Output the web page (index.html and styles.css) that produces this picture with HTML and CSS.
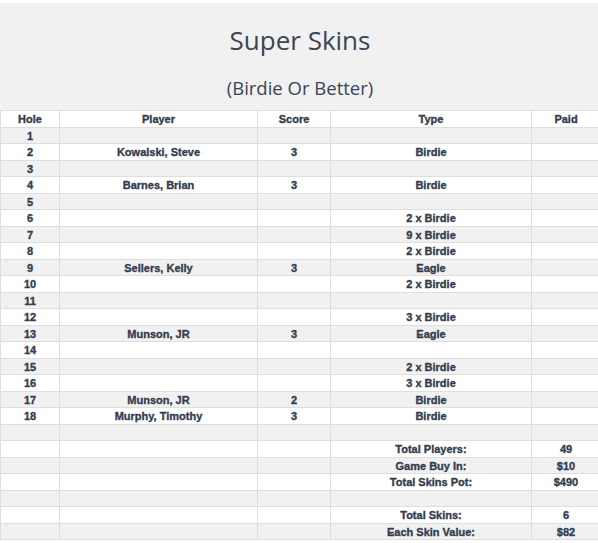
FILE: index.html
```html
<!DOCTYPE html>
<html>
<head>
<meta charset="utf-8">
<link rel="stylesheet" href="styles.css">
</head>
<body>
<div class="page">
  <header class="banner">
    <h1 class="title">Super Skins</h1>
    <h2 class="subtitle">(Birdie Or Better)</h2>
  </header>
  <table class="skins">
    <colgroup>
      <col class="c-hole"><col class="c-player"><col class="c-score"><col class="c-type"><col class="c-paid">
    </colgroup>
    <thead>
      <tr><th>Hole</th><th>Player</th><th>Score</th><th>Type</th><th>Paid</th></tr>
    </thead>
    <tbody>
      <tr><td>1</td><td></td><td></td><td></td><td></td></tr>
      <tr><td>2</td><td>Kowalski, Steve</td><td>3</td><td>Birdie</td><td></td></tr>
      <tr><td>3</td><td></td><td></td><td></td><td></td></tr>
      <tr><td>4</td><td>Barnes, Brian</td><td>3</td><td>Birdie</td><td></td></tr>
      <tr><td>5</td><td></td><td></td><td></td><td></td></tr>
      <tr><td>6</td><td></td><td></td><td>2 x Birdie</td><td></td></tr>
      <tr><td>7</td><td></td><td></td><td>9 x Birdie</td><td></td></tr>
      <tr><td>8</td><td></td><td></td><td>2 x Birdie</td><td></td></tr>
      <tr><td>9</td><td>Sellers, Kelly</td><td>3</td><td>Eagle</td><td></td></tr>
      <tr><td>10</td><td></td><td></td><td>2 x Birdie</td><td></td></tr>
      <tr><td>11</td><td></td><td></td><td></td><td></td></tr>
      <tr><td>12</td><td></td><td></td><td>3 x Birdie</td><td></td></tr>
      <tr><td>13</td><td>Munson, JR</td><td>3</td><td>Eagle</td><td></td></tr>
      <tr><td>14</td><td></td><td></td><td></td><td></td></tr>
      <tr><td>15</td><td></td><td></td><td>2 x Birdie</td><td></td></tr>
      <tr><td>16</td><td></td><td></td><td>3 x Birdie</td><td></td></tr>
      <tr><td>17</td><td>Munson, JR</td><td>2</td><td>Birdie</td><td></td></tr>
      <tr><td>18</td><td>Murphy, Timothy</td><td>3</td><td>Birdie</td><td></td></tr>
      <tr><td></td><td></td><td></td><td></td><td></td></tr>
      <tr><td></td><td></td><td></td><td>Total Players:</td><td>49</td></tr>
      <tr><td></td><td></td><td></td><td>Game Buy In:</td><td>$10</td></tr>
      <tr><td></td><td></td><td></td><td>Total Skins Pot:</td><td>$490</td></tr>
      <tr><td></td><td></td><td></td><td></td><td></td></tr>
      <tr><td></td><td></td><td></td><td>Total Skins:</td><td>6</td></tr>
      <tr><td></td><td></td><td></td><td>Each Skin Value:</td><td>$82</td></tr>
    </tbody>
  </table>
</div>
</body>
</html>
```
FILE: styles.css
```css
html, body {
  margin: 0;
  padding: 0;
  background: #ffffff;
}
.page {
  padding-top: 3px;
  width: 600px;
}
.banner {
  background: #f1f1f1;
  height: 107px;
  display: flex;
  flex-direction: column;
  align-items: center;
  box-sizing: border-box;
  padding-top: 20px;
}
.title {
  margin: 0;
  font-family: "Open Sans", "DejaVu Sans", sans-serif;
  font-weight: 400;
  font-size: 26px;
  line-height: 34px;
  color: #3a4556;
}
.subtitle {
  margin: 19px 0 0;
  font-family: "Open Sans", "DejaVu Sans", sans-serif;
  font-weight: 400;
  font-size: 18.5px;
  line-height: 24px;
  color: #3a4556;
}
.skins {
  border-collapse: collapse;
  table-layout: fixed;
  width: 600px;
  font-family: "Liberation Sans", Arial, sans-serif;
  font-weight: 700;
  font-size: 11px;
  color: #333d4f;
}
.c-hole { width: 59px; }
.c-player { width: 198px; }
.c-score { width: 73px; }
.c-type { width: 201px; }
.c-paid { width: 69px; }
.skins th, .skins td {
  border: 1px solid #dedede;
  padding: 1px 0 0;
  height: 14.5px;
  line-height: 14.5px;
  text-align: center;
  font-weight: 700;
  white-space: nowrap;
  overflow: hidden;
  -webkit-text-stroke: 0.35px #333d4f;
}
.skins thead tr { background: #ffffff; }
.skins tbody tr:nth-child(odd) { background: #f1f1f1; }
.skins tbody tr:nth-child(even) { background: #ffffff; }
```
